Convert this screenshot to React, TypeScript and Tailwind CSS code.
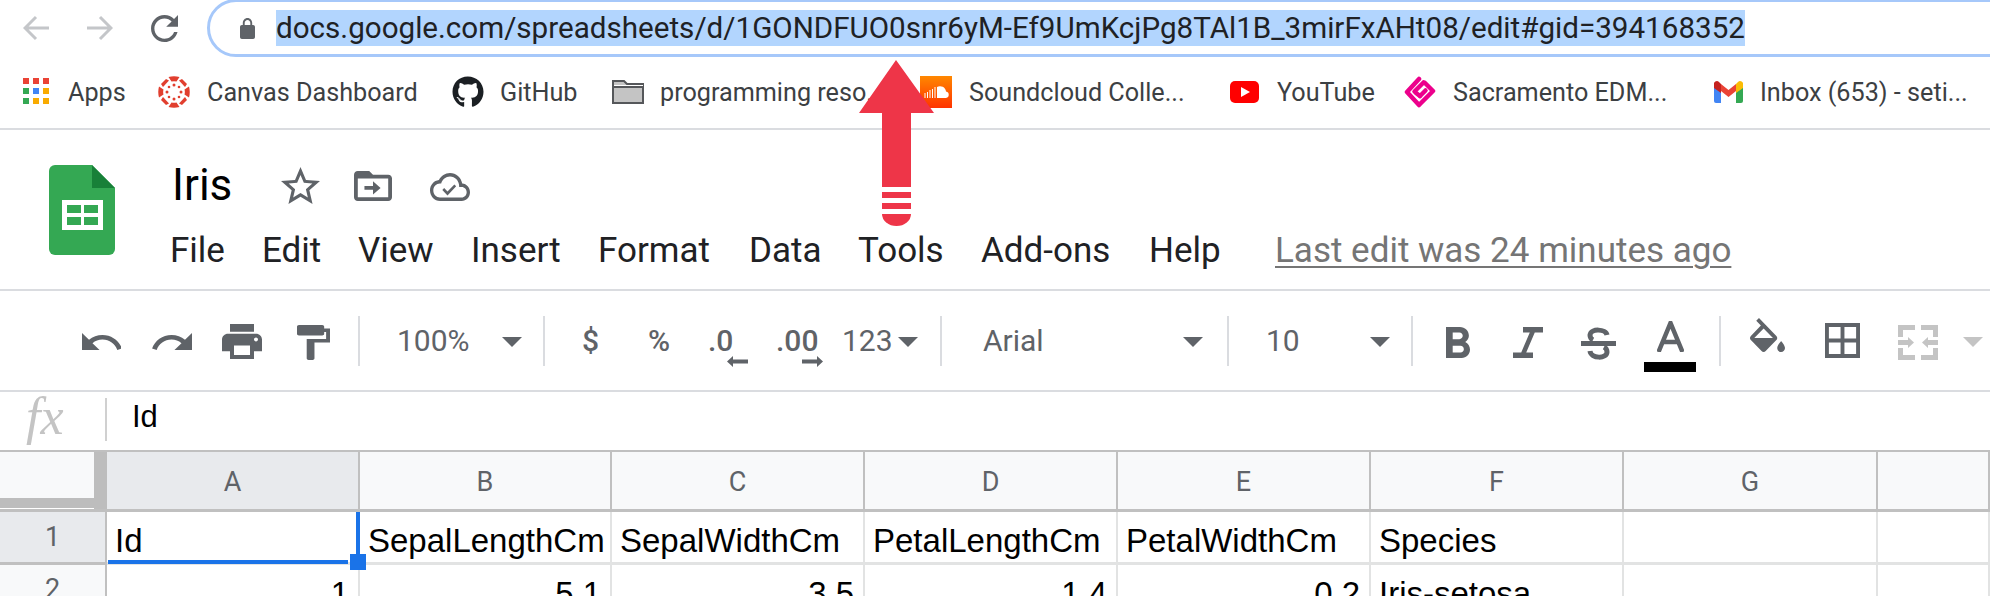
import React from 'react';
import { FaGithub } from 'react-icons/fa';

const PATHS = {
  lock: 'M18 8h-1V6c0-2.76-2.24-5-5-5S7 3.24 7 6v2H6c-1.1 0-2 .9-2 2v10c0 1.1.9 2 2 2h12c1.1 0 2-.9 2-2V10c0-1.1-.9-2-2-2zM9 6c0-1.66 1.34-3 3-3s3 1.34 3 3v2H9V6z',
  reload: 'M17.65 6.35C16.2 4.9 14.21 4 12 4c-4.42 0-7.99 3.58-7.99 8s3.57 8 7.99 8c3.73 0 6.84-2.55 7.73-6h-2.08c-.82 2.33-3.04 4-5.65 4-3.31 0-6-2.69-6-6s2.69-6 6-6c1.66 0 3.14.69 4.22 1.78L13 11h7V4l-2.35 2.35z',
  star: 'M22 9.24l-7.19-.62L12 2 9.19 8.63 2 9.24l5.46 4.73L5.82 21 12 17.27 18.18 21l-1.63-7.03L22 9.24zM12 15.4l-3.76 2.27 1-4.28-3.32-2.88 4.38-.38L12 6.1l1.71 4.04 4.38.38-3.32 2.88 1 4.28L12 15.4z',
  move: 'M20 6h-8l-2-2H4c-1.1 0-1.99.9-1.99 2L2 18c0 1.1.9 2 2 2h16c1.1 0 2-.9 2-2V8c0-1.1-.9-2-2-2zm0 12H4V8h16v10zM7.5 12H12V9.5l4 3.5-4 3.5V14H7.5z',
  cloud: 'M19.35 10.04C18.67 6.59 15.64 4 12 4 9.11 4 6.6 5.64 5.35 8.04 2.34 8.36 0 10.91 0 14c0 3.31 2.69 6 6 6h13c2.76 0 5-2.24 5-5 0-2.64-2.05-4.78-4.65-4.96zM19 18H6c-2.21 0-4-1.79-4-4s1.79-4 4-4h.71C7.37 7.69 9.48 6 12 6c3.04 0 5.5 2.46 5.5 5.5v.5H19c1.66 0 3 1.34 3 3s-1.34 3-3 3zM10.5 14.6l-2-2-1.1 1.1 3.1 3.1 5.2-5.2-1.1-1.1z',
  undo: 'M12.5 8c-2.65 0-5.05.99-6.9 2.6L2 7v9h9l-3.62-3.62c1.39-1.16 3.16-1.88 5.12-1.88 3.54 0 6.55 2.31 7.6 5.5l2.37-.78C21.08 11.03 17.15 8 12.5 8z',
  redo: 'M18.4 10.6C16.55 8.99 14.15 8 11.5 8c-4.65 0-8.58 3.03-9.96 7.22L3.9 16c1.05-3.19 4.05-5.5 7.6-5.5 1.95 0 3.73.72 5.12 1.88L13 16h9V7l-3.6 3.6z',
  print: 'M19 8H5c-1.66 0-3 1.34-3 3v6h4v4h12v-4h4v-6c0-1.66-1.34-3-3-3zm-3 11H8v-5h8v5zm3-7c-.55 0-1-.45-1-1s.45-1 1-1 1 .45 1 1-.45 1-1 1zm-1-9H6v4h12V3z',
  paint: 'M18 4V3c0-.55-.45-1-1-1H5c-.55 0-1 .45-1 1v4c0 .55.45 1 1 1h12c.55 0 1-.45 1-1V6h1v4H9v11c0 .55.45 1 1 1h2c.55 0 1-.45 1-1v-9h8V4h-3z',
  bold: 'M15.6 10.79c.97-.67 1.65-1.77 1.65-2.79 0-2.26-1.75-4-4-4H7v14h7.04c2.09 0 3.71-1.7 3.71-3.79 0-1.52-.86-2.82-2.15-3.42zM10 6.5h3c.83 0 1.5.67 1.5 1.5s-.67 1.5-1.5 1.5h-3v-3zm3.5 9H10v-3h3.5c.83 0 1.5.67 1.5 1.5s-.67 1.5-1.5 1.5z',
  italic: 'M10 4v2.500h2.710l-3.420 9H6V18h8v-2.500h-2.710l3.420-9H18V4z',
  fill: 'M16.56 8.94L7.62 0 6.21 1.41l2.38 2.38-5.15 5.15c-.59.59-.59 1.54 0 2.12l5.5 5.5c.29.29.68.44 1.06.44s.77-.15 1.06-.44l5.5-5.5c.59-.58.59-1.53 0-2.12zM5.21 10L10 5.21 14.79 10H5.21zM19 11.5s-2 2.17-2 3.5c0 1.1.9 2 2 2s2-.9 2-2c0-1.33-2-3.5-2-3.5z',
  borders: 'M3 3v18h18V3H3zm8 16H5v-6h6v6zm0-8H5V5h6v6zm8 8h-6v-6h6v6zm0-8h-6V5h6v6z',
};

const Ic: React.FC<{ d: string; vb: string; className: string }> = ({ d, vb, className }) => (
  <svg viewBox={vb} preserveAspectRatio="none" className={className} fill="currentColor">
    <path d={d} fillRule="evenodd" />
  </svg>
);

const Caret: React.FC<{ className?: string }> = ({ className = 'text-[#5f6368]' }) => (
  <svg viewBox="0 0 20 10" className={`w-5 h-2.5 mt-[46px] ${className}`} fill="currentColor">
    <polygon points="0,0 20,0 10,10" />
  </svg>
);

const Divider = () => <div className="w-0.5 h-[50px] mt-[25px] bg-[#dadce0]" />;

const NavArrow: React.FC<{ flip?: boolean; className: string }> = ({ flip, className }) => (
  <svg viewBox="0 0 26 26" className={className} fill="none" stroke="currentColor" strokeWidth="3">
    {flip ? <path d="M0 13h24M13 2l11 11-11 11" /> : <path d="M26 13H2M13 2 2 13l11 11" />}
  </svg>
);

const AppsIcon = () => (
  <div className="grid grid-cols-3 gap-1 w-[26px] h-[26px]">
    <div className="w-[6px] h-[6px] bg-[#ea4335]" />
    <div className="w-[6px] h-[6px] bg-[#ea4335]" />
    <div className="w-[6px] h-[6px] bg-[#ea4335]" />
    <div className="w-[6px] h-[6px] bg-[#34a853]" />
    <div className="w-[6px] h-[6px] bg-[#4285f4]" />
    <div className="w-[6px] h-[6px] bg-[#f9ab00]" />
    <div className="w-[6px] h-[6px] bg-[#34a853]" />
    <div className="w-[6px] h-[6px] bg-[#f9ab00]" />
    <div className="w-[6px] h-[6px] bg-[#f9ab00]" />
  </div>
);

const CanvasIcon = () => (
  <svg viewBox="0 0 32 32" className="w-8 h-8" fill="#e13f2f">
    <path d="M10.500 1Q16-.500 21.500 1L18.500 5.500Q16 4.800 13.500 5.500z" />
    <path d="M10.500 31Q16 32.500 21.500 31L18.500 26.500Q16 27.200 13.500 26.500z" />
    <path d="M1 10.500Q-.500 16 1 21.500L5.500 18.500Q4.800 16 5.500 13.500z" />
    <path d="M31 10.500Q32.500 16 31 21.500L26.500 18.500Q27.200 16 26.500 13.500z" />
    <path d="M3 8 8 3 11 4.500 5 11z" />
    <path d="M29 8 24 3 21 4.500 27 11z" />
    <path d="M3 24 8 29 11 27.500 5 21z" />
    <path d="M29 24 24 29 21 27.500 27 21z" />
    <circle cx="16" cy="9" r="1.500" /><circle cx="16" cy="23" r="1.500" />
    <circle cx="9" cy="16" r="1.500" /><circle cx="23" cy="16" r="1.500" />
    <circle cx="11" cy="11" r="1.300" /><circle cx="21" cy="11" r="1.300" />
    <circle cx="11" cy="21" r="1.300" /><circle cx="21" cy="21" r="1.300" />
  </svg>
);

const FolderIcon = () => (
  <svg viewBox="0 0 32 24" className="w-8 h-6 mt-1">
    <path d="M1 23V1h11l3 3h16v19z" fill="#c4c4c4" stroke="#55575a" strokeWidth="2" />
    <path d="M1 7h30" stroke="#55575a" strokeWidth="2" />
    <path d="M2 5h29v1H2z" fill="#fff" />
  </svg>
);

const SoundcloudIcon = () => (
  <svg viewBox="0 0 32 32" className="w-8 h-8">
    <defs>
      <linearGradient id="sc" x1="0" y1="0" x2="0" y2="1">
        <stop offset="0" stopColor="#ff8800" />
        <stop offset="1" stopColor="#ff3300" />
      </linearGradient>
    </defs>
    <rect width="32" height="32" fill="url(#sc)" />
    <path d="M17 11a6 6 0 0 1 9 4.500 3.300 3.300 0 0 1 0 6.500h-9z" fill="#fff" />
    <path d="M15 11v11M12.500 13v9M10 14v8M7.500 16v6M5 17v5" stroke="#fff" strokeWidth="1" />
  </svg>
);

const YoutubeIcon = () => (
  <svg viewBox="0 0 29 22" className="w-[29px] h-[22px] mt-[5px]">
    <rect width="29" height="22" rx="5" fill="#ff0000" />
    <polygon points="11,6 20,11 11,16" fill="#fff" />
  </svg>
);

const SacramentoIcon = () => (
  <svg viewBox="0 0 32 32" className="w-8 h-8" fill="none" stroke="#ec008c" strokeWidth="4.500" strokeLinejoin="round" strokeLinecap="round">
    <path d="M15 3 3 16l12 13 14-14-8-8" />
    <path d="M10.500 15.500l9-9" />
    <path d="M16 20l5.500-5.500" />
    <path d="M12 17l4 3" />
  </svg>
);

const GmailIcon = () => (
  <svg viewBox="0 0 29 24" className="w-[29px] h-6 mt-[4px]">
    <path d="M0 5v16a2 2 0 0 0 2 2h5V10z" fill="#4285f4" />
    <path d="M22 10v13h5a2 2 0 0 0 2-2V5z" fill="#34a853" />
    <path d="M7 4 14.500 10 22 4v7l-7.500 6L7 11z" fill="#ea4335" />
    <path d="M22 4 24 2a3 3 0 0 1 5 3v3l-7 5z" fill="#fbbc04" />
    <path d="M0 8V5a3 3 0 0 1 5-3l2 2v9z" fill="#c5221f" />
  </svg>
);

const Bookmark: React.FC<{ className: string; gap: string; icon: React.ReactNode; label: string }> = ({ className, gap, icon, label }) => (
  <div className={`flex items-start h-8 ${className}`}>
    {icon}
    <span className={`text-[25.200px] leading-[34px] text-[#3c4043] whitespace-nowrap ${gap}`}>{label}</span>
  </div>
);

const SheetsLogo = () => (
  <svg viewBox="0 0 66 90" className="w-[66px] h-[90px]">
    <path d="M6 0h37l23 23v61a6 6 0 0 1-6 6H6a6 6 0 0 1-6-6V6a6 6 0 0 1 6-6z" fill="#34a853" />
    <path d="M43 0l23 23H43z" fill="#188038" />
    <rect x="13" y="35" width="41" height="30" fill="#fff" />
    <rect x="18" y="40" width="14" height="8" fill="#34a853" />
    <rect x="35" y="40" width="14" height="8" fill="#34a853" />
    <rect x="18" y="52" width="14" height="8" fill="#34a853" />
    <rect x="35" y="52" width="14" height="8" fill="#34a853" />
  </svg>
);

const MENU: [string, string][] = [
  ['File', 'w-[92px]'],
  ['Edit', 'w-[96px]'],
  ['View', 'w-[113px]'],
  ['Insert', 'w-[127px]'],
  ['Format', 'w-[151px]'],
  ['Data', 'w-[109px]'],
  ['Tools', 'w-[123px]'],
  ['Add-ons', 'w-[168px]'],
  ['Help', 'w-[126px]'],
];

const ToolText: React.FC<{ className: string; children: React.ReactNode }> = ({ className, children }) => (
  <div className={`h-[99px] pt-[32px] text-[#5f6368] text-[30px] leading-9 whitespace-nowrap ${className}`}>{children}</div>
);

const Toolbar = () => (
  <div className="flex items-start h-[99px] pl-[82px] text-[#5f6368]">
    <div className="w-[70px]"><Ic d={PATHS.undo} vb="2 7 20 9" className="w-[39px] h-[17px] mt-[42px]" /></div>
    <div className="w-[70px]"><Ic d={PATHS.redo} vb="1.500 7 20.500 9" className="w-10 h-[17px] mt-[42px]" /></div>
    <div className="w-[75px]"><Ic d={PATHS.print} vb="2 3 20 18" className="w-10 h-[35px] mt-[33px]" /></div>
    <div className="w-[61px]"><Ic d={PATHS.paint} vb="4 2 17 20" className="w-[33px] h-[35px] mt-[34px]" /></div>
    <div className="w-[39px]"><Divider /></div>
    <ToolText className="w-[105px]">100%</ToolText>
    <div className="w-[41px]"><Caret /></div>
    <div className="w-[39px]"><Divider /></div>
    <ToolText className="w-[66px] font-medium">$</ToolText>
    <ToolText className="w-[60px] font-medium">%</ToolText>
    <div className="w-[68px] relative">
      <ToolText className="font-medium">.0</ToolText>
      <svg viewBox="0 0 21 11" className="absolute left-[19px] top-[65px] w-[21px] h-[11px]" fill="currentColor"><path d="M0 5.500 6 0v3.500h15v4H6V11z" /></svg>
    </div>
    <div className="w-[66px] relative">
      <ToolText className="font-medium">.00</ToolText>
      <svg viewBox="0 0 21 11" className="absolute left-[26px] top-[65px] w-[21px] h-[11px]" fill="currentColor"><path d="M21 5.500 15 0v3.500H0v4h15V11z" /></svg>
    </div>
    <ToolText className="w-[56px]">123</ToolText>
    <div className="w-[42px]"><Caret /></div>
    <div className="w-[43px]"><Divider /></div>
    <ToolText className="w-[200px]">Arial</ToolText>
    <div className="w-[44px]"><Caret /></div>
    <div className="w-[39px]"><Divider /></div>
    <ToolText className="w-[104px]">10</ToolText>
    <div className="w-[41px]"><Caret /></div>
    <div className="w-[35px]"><Divider /></div>
    <div className="w-[67px]"><Ic d={PATHS.bold} vb="7 4 10.750 14" className="w-6 h-[31px] mt-[36px]" /></div>
    <div className="w-[68px]"><Ic d={PATHS.italic} vb="6 4 12 14" className="w-[30px] h-[31px] mt-[36px]" /></div>
    <div className="w-[63px]">
      <svg viewBox="0 0 35 33" className="w-[35px] h-[33px] mt-[36px]" fill="none" stroke="currentColor" strokeWidth="5">
        <path d="M26 8C25 2 10 1 9 8c0 2 1 4 3 5" />
        <path d="M0 16.500h35" />
        <path d="M9 24c1 8 17 8 17 1 0-2-1-4-3-5" />
      </svg>
    </div>
    <div className="w-[75px] flex flex-col items-center pr-[23px]">
      <svg viewBox="0 0 27 31" className="w-[27px] h-[31px] mt-[30px]" fill="none" stroke="currentColor" strokeWidth="4.500">
        <path d="M1.500 31 13.500 2l12 29M6 21h15" />
      </svg>
      <div className="w-[52px] h-2.5 mt-[10px] bg-black" />
    </div>
    <div className="w-[31px]"><Divider /></div>
    <div className="w-[75px]"><Ic d={PATHS.fill} vb="3 0 18 17" className="w-[35px] h-[34px] mt-[27px]" /></div>
    <div className="w-[73px]"><Ic d={PATHS.borders} vb="3 3 18 18" className="w-[35px] h-[35px] mt-[32px]" /></div>
    <div className="w-[65px]">
      <svg viewBox="0 0 40 35" className="w-10 h-[35px] mt-[34px] text-[#c4c4c4]" fill="currentColor">
        <path d="M0 0h17v5H5v7H0zM23 0h17v12h-5V5H23zM0 23h5v7h12v5H0zM35 23h5v12H23v-5h12z" />
        <path d="M0 15h10v-3l6 5.500-6 5.500v-3H0zM40 15H30v-3l-6 5.500 6 5.500v-3h10z" />
      </svg>
    </div>
    <Caret className="text-[#c4c4c4]" />
  </div>
);

const COLS = 'grid grid-cols-[107px_253px_252px_253px_253px_253px_253px_254px_1fr]';
const HEAD_CELL = 'flex items-center justify-center border-r-2 border-[#c0c0c0] text-[27px] text-[#5f6368]';
const CELL = "border-r-2 border-[#e2e3e3] font-['Liberation_Sans',sans-serif] text-[33px] leading-[46px] text-black whitespace-nowrap overflow-hidden";

const Sheet = () => (
  <div className="relative">
    <div className={`${COLS} h-[62px] border-t-2 border-b-[3px] border-[#c0c0c0]`}>
      <div className="relative bg-[#f8f9fa] border-r-[13px] border-[#bdbdbd]">
        <div className="absolute left-0 right-0 bottom-0 h-[11px] bg-[#bdbdbd] border-b border-white" />
      </div>
      <div className={`${HEAD_CELL} pt-1 bg-[#e8eaed]`}>A</div>
      <div className={`${HEAD_CELL} pt-1 bg-[#f8f9fa]`}>B</div>
      <div className={`${HEAD_CELL} pt-1 bg-[#f8f9fa]`}>C</div>
      <div className={`${HEAD_CELL} pt-1 bg-[#f8f9fa]`}>D</div>
      <div className={`${HEAD_CELL} pt-1 bg-[#f8f9fa]`}>E</div>
      <div className={`${HEAD_CELL} pt-1 bg-[#f8f9fa]`}>F</div>
      <div className={`${HEAD_CELL} pt-1 bg-[#f8f9fa]`}>G</div>
      <div className={`${HEAD_CELL} bg-[#f8f9fa]`} />
    </div>
    <div className={`${COLS} h-[53px] border-b-[3px] border-[#e2e3e3]`}>
      <div className={`${HEAD_CELL} bg-[#e8eaed] -mb-[3px] border-b-[3px] border-b-[#c0c0c0]`}>1</div>
      <div className={`${CELL} pl-[8px] pt-[6px]`}>Id</div>
      <div className={`${CELL} pl-[8px] pt-[6px]`}>SepalLengthCm</div>
      <div className={`${CELL} pl-[8px] pt-[6px]`}>SepalWidthCm</div>
      <div className={`${CELL} pl-[8px] pt-[6px]`}>PetalLengthCm</div>
      <div className={`${CELL} pl-[8px] pt-[6px]`}>PetalWidthCm</div>
      <div className={`${CELL} pl-[8px] pt-[6px]`}>Species</div>
      <div className={CELL} />
      <div className={CELL} />
    </div>
    <div className={`${COLS} h-[31px]`}>
      <div className={`${HEAD_CELL} bg-[#f8f9fa] items-start`}><span className="leading-[48px]">2</span></div>
      <div className={`${CELL} text-right pr-[9px] pt-[6px]`}>1</div>
      <div className={`${CELL} text-right pr-[9px] pt-[6px]`}>5.1</div>
      <div className={`${CELL} text-right pr-[9px] pt-[6px]`}>3.5</div>
      <div className={`${CELL} text-right pr-[9px] pt-[6px]`}>1.4</div>
      <div className={`${CELL} text-right pr-[9px] pt-[6px]`}>0.2</div>
      <div className={`${CELL} pl-[8px] pt-[6px]`}>Iris-setosa</div>
      <div className={CELL} />
      <div className={CELL} />
    </div>

    {/* selected cell A1 */}
    <div className="absolute left-[356px] top-[62px] w-1 h-[42px] bg-[#1a73e8]" />
    <div className="absolute left-[108px] top-[110px] w-[240px] h-1 bg-[#1a73e8]" />
    <div className="absolute left-[350px] top-[104px] w-4 h-4 bg-[#1a73e8]" />
  </div>
);

export default function App() {
  return (
    <div className="relative w-[1990px] h-[596px] overflow-hidden bg-white font-['Roboto',sans-serif]">
      {/* address bar */}
      <div className="flex items-start h-[57px]">
        <NavArrow className="w-[26px] h-[26px] ml-[23px] mt-[15px] text-[#c4c6c9]" />
        <NavArrow flip className="w-[26px] h-[26px] ml-[38px] mt-[15px] text-[#c4c6c9]" />
        <Ic d={PATHS.reload} vb="4 4 16 16" className="w-[27px] h-[27px] ml-[38px] mt-[15px] text-[#5f6368]" />
        <div className="flex items-center flex-1 h-[58px] -mt-px ml-[29px] -mr-4 pl-[30px] border-[3px] rounded-l-[29px] border-[#a6c8fa]">
          <Ic d={PATHS.lock} vb="4 1 16 21" className="w-[15px] h-[21px] text-[#5f6368]" />
          <span className="ml-[21px] h-9 leading-9 bg-[#b2d5fe] text-[#202124] text-[29.600px] whitespace-nowrap">docs.google.com/spreadsheets/d/1GONDFUO0snr6yM-Ef9UmKcjPg8TAl1B_3mirFxAHt08/edit#gid=394168352</span>
        </div>
      </div>

      {/* bookmarks */}
      <div className="flex items-start h-[73px] pt-[19px] pl-[23px] border-b-2 border-[#dadce0]">
        <Bookmark className="w-[135px]" gap="ml-[19px]" icon={<div className="pt-[2px]"><AppsIcon /></div>} label="Apps" />
        <Bookmark className="w-[294px]" gap="ml-[17px]" icon={<CanvasIcon />} label="Canvas Dashboard" />
        <Bookmark className="w-[160px]" gap="ml-[16px]" icon={<FaGithub className="w-8 h-8 text-[#1b1f23]" />} label="GitHub" />
        <Bookmark className="w-[308px]" gap="ml-[16px]" icon={<FolderIcon />} label="programming reso..." />
        <Bookmark className="w-[310px]" gap="ml-[17px]" icon={<SoundcloudIcon />} label="Soundcloud Colle..." />
        <Bookmark className="w-[174px]" gap="ml-[18px]" icon={<YoutubeIcon />} label="YouTube" />
        <Bookmark className="w-[310px]" gap="ml-[17px]" icon={<SacramentoIcon />} label="Sacramento EDM..." />
        <Bookmark className="w-[270px]" gap="ml-[17px]" icon={<GmailIcon />} label="Inbox (653) - seti..." />
      </div>

      {/* docs title and menu */}
      <div className="flex items-start h-[161px] border-b-2 border-[#dadce0]">
        <div className="ml-[49px] mt-[35px]"><SheetsLogo /></div>
        <div className="ml-[55px]">
          <div className="flex items-start h-[94px]">
            <span className="w-[111px] pt-[30px] pl-[2px] text-[44px] leading-[50px] text-black">Iris</span>
            <Ic d={PATHS.star} vb="2 2 20 19" className="w-[39px] h-[37px] mt-[37px] text-[#5f6368]" />
            <Ic d={PATHS.move} vb="2 4 20 16" className="w-[38px] h-[30px] ml-[34px] mt-[41px] text-[#5f6368]" />
            <Ic d={PATHS.cloud} vb="0 4 24 16" className="w-10 h-[28px] ml-[38px] mt-[43px] text-[#5f6368]" />
          </div>
          <div className="flex items-start text-[35px] leading-9 text-[#202124] mt-[9px]">
            {MENU.map(([label, width]) => (
              <span key={label} className={width}>{label}</span>
            ))}
            <span className="underline decoration-2 underline-offset-[4px] text-[#757575] whitespace-nowrap">Last edit was 24 minutes ago</span>
          </div>
        </div>
      </div>

      <Toolbar />

      {/* formula bar */}
      <div className="flex items-start h-[60px] border-t-2 border-[#dadce0]">
        <span className="w-[105px] pl-[26px] font-['Liberation_Serif',serif] italic text-[52px] leading-[50px] text-[#c4c4c4]">fx</span>
        <div className="w-0.5 h-[43px] mt-[6px] bg-[#d0d0d0]" />
        <span className="ml-[25px] pt-[7px] font-['Liberation_Sans',sans-serif] text-[31px] leading-9 text-black">Id</span>
      </div>

      <Sheet />

      {/* red arrow annotation */}
      <svg viewBox="0 0 75 166" className="absolute left-[859px] top-[60px] w-[75px] h-[166px]" fill="#ee3548">
        <polygon points="37,0 75,53 52,53 52,127 23,127 23,53 0,53" />
        <rect x="23" y="132" width="29" height="6" />
        <rect x="23" y="143" width="29" height="6" />
        <path d="M23 154h29v0a14.500 12 0 0 1-29 0z" />
      </svg>
    </div>
  );
}
